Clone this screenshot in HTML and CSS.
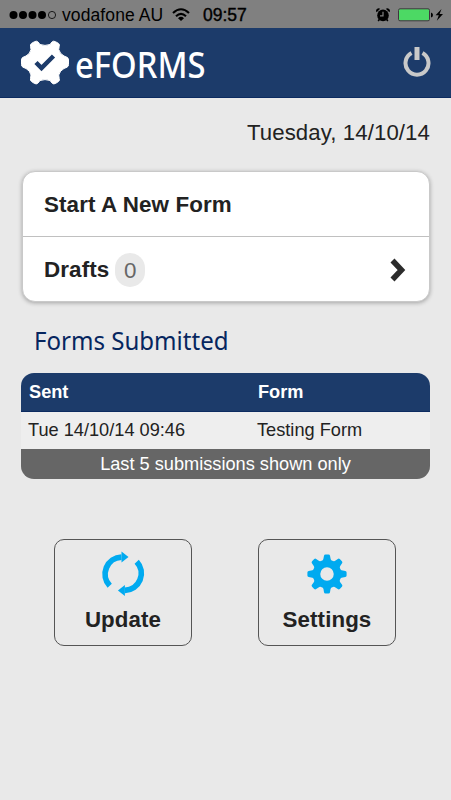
FILE: index.html
```html
<!DOCTYPE html>
<html lang="en">
<head>
<meta charset="utf-8">
<title>eFORMS</title>
<link rel="stylesheet" href="styles.css">
</head>
<body>
<div class="status">
  <svg class="signal" width="50" height="10" viewBox="0 0 50 10"><circle cx="4.5" cy="5" r="4"/><circle cx="14" cy="5" r="4"/><circle cx="23.5" cy="5" r="4"/><circle cx="33" cy="5" r="4"/><circle cx="43" cy="5" r="3.6" fill="none" stroke="#000" stroke-width=".8"/></svg>
  <span class="carrier">vodafone AU</span>
  <svg class="wifi" width="18" height="14" viewBox="0 0 18 14"><g fill="none" stroke="#000" stroke-width="2.1"><path d="M1 5Q9-2.5 17 5M4 8.2Q9 3.5 14 8.2"/></g><path d="M6 10.2Q9 7.5 12 10.2L9 13Z"/></svg>
  <span class="time">09:57</span>
  <svg class="alarm" width="14" height="14" viewBox="0 0 14 14"><circle cx="7" cy="7.4" r="5.8"/><path d="M.6 4.2A2.5 2.5 0 0 1 4.2.8ZM13.4 4.2A2.5 2.5 0 0 0 9.8.8ZM2.4 11l1.5 1.2-1.3 1.3-1-.9ZM11.6 11l-1.5 1.2 1.3 1.3 1-.9Z"/><path d="M7 3.8V7.8H4" fill="none" stroke="#808080" stroke-width="1.2"/></svg>
  <svg class="battery" width="46" height="14" viewBox="0 0 46 14"><rect x=".5" y=".8" width="31" height="12" rx="1.5" fill="#4cd964" stroke="#40343f"/><path d="M33 4.5Q35 5 35 7T33 9.5Z"/><path d="M43.5 1L37.6 7.3H40.8L38.8 12.8L45 6H41.6Z"/></svg>
</div>
<header class="header">
  <svg class="logo" width="50" height="48" viewBox="20 40 50 48"><path d="M34.5 42.7Q36.5 41.5 38 43L40 45.5Q45 47.3 50 45.5L52 43Q53.5 41.5 55.5 42.7L58.5 44.400Q60 45.5 59.2 47.3L58.7 50.5Q60 55 64 57L67 58.3Q68.5 59 68.5 61V65.5Q68.5 67.5 67 68.2L64 69.5Q60 71.5 58.7 76L59.2 79.5Q60 81.5 58.5 82.5L55.5 84.5Q53.5 85.5 52 84L50 81.5Q45 79.7 40 81.5L38 84Q36.5 85.5 34.5 84.5L31.5 82.5Q30 81.5 30.5 79.5L31 76Q30 71.5 26 69.5L23 68.2Q21.5 67.5 21.5 65.5V61Q21.5 59 23 58.3L26 57Q30 55 31 50.5L30.5 47.3Q30 45.5 31.5 44.4Z" fill="#fff" stroke="#fff"/><path d="M36 63.5L41.500 69L53.500 57" fill="none" stroke="#1c3b6a" stroke-width="4.5"/></svg>
  <span class="brand">eFORMS</span>
  <svg class="power" width="28" height="32" viewBox="0 0 28 32"><path d="M8.5 6.1A11.5 11.5 0 1 0 19.5 6.1" fill="none" stroke="#c9c9c9" stroke-width="4"/><path d="M14 0V13" stroke="#c9c9c9" stroke-width="5"/></svg>
</header>
<main>
  <div class="date">Tuesday, 14/10/14</div>
  <section class="menu">
    <div class="menu-row first">Start A New Form</div>
    <div class="menu-row"><span>Drafts</span><span class="count">0</span><svg class="arrow" width="18" height="24" viewBox="0 0 18 24"><path d="M3.5 2.5L12.5 12L3.5 21.5" fill="none" stroke="#2c2c2c" stroke-width="5.5"/></svg></div>
  </section>
  <h2><span>Forms Submitted</span></h2>
  <section class="table">
    <div class="head"><span>Sent</span><span>Form</span></div>
    <div class="row"><span>Tue 14/10/14 09:46</span><span>Testing Form</span></div>
    <div class="foot">Last 5 submissions shown only</div>
  </section>
  <div class="actions">
    <div class="button"><svg width="44" height="46" viewBox="0 0 44 46"><g id="half"><path d="M8.7 34.7A17 17 0 0 1 20.5 6.1" fill="none" stroke="#00aaf0" stroke-width="5.800"/><path d="M20.5.5L27.5 6L20.5 11.5Z" fill="#00aaf0"/></g><use href="#half" transform="rotate(180 22.2 22.7)"/></svg><span>Update</span></div>
    <div class="button settings"><svg width="44" height="46" viewBox="-22 -23 44 46"><g fill="#00aaf0"><circle r="10.5" fill="none" stroke="#00aaf0" stroke-width="7.5"/><g id="pair"><path d="M-5-12Q-3.500-14-3-18.300Q-2.800-19.600-1.500-19.600H1.500Q2.800-19.600 3-18.300Q3.500-14 5-12ZM-5 12Q-3.500 14-3 18.300Q-2.800 19.600-1.500 19.600H1.500Q2.800 19.600 3 18.300Q3.500 14 5 12Z"/></g><use href="#pair" transform="rotate(45)"/><use href="#pair" transform="rotate(90)"/><use href="#pair" transform="rotate(135)"/></g></svg><span>Settings</span></div>
  </div>
</main>
</body>
</html>
```
FILE: styles.css
```css
* { box-sizing: border-box; }
body { margin: 0; height: 800px; background: #e9e9e9; color: #222; font-family: "Liberation Sans", Arial, sans-serif; overflow: hidden; }
svg { display: block; flex: none; }
.status { display: flex; align-items: center; height: 28px; padding: 1px 7px 0 9px; background: #808080; color: #000; font-size: 17.5px; line-height: 28px; white-space: nowrap; }
.carrier { width: 101px; margin-left: 3px; letter-spacing: .1px; }
.wifi { margin-left: 9px; }
.time { margin-left: 13px; width: 45px; -webkit-text-stroke: .4px #000; }
.alarm { margin-left: auto; }
.battery { margin-left: 8px; }
.header { display: flex; align-items: center; height: 70px; padding: 0 20px; background: #1c3b6a; border-bottom: 1px solid #0c2b60; }
.brand { margin: 3px 0 0 5px; color: #fff; font: 500 37px/44px "Noto Sans", sans-serif; transform: scaleX(.885); transform-origin: left; }
.power { margin-left: auto; }
main { padding: 0 21px; }
.date { height: 73px; padding-top: 20px; text-align: right; font-size: 22.2px; line-height: 30px; letter-spacing: .1px; }
.menu { height: 131px; margin: 0 0 0 1px; background: #fff; border: 1px solid #c9c9c9; border-radius: 13px; box-shadow: 0 1px 4px rgba(0,0,0,.3); font-size: 22.4px; font-weight: bold; letter-spacing: .1px; }
.menu-row { display: flex; align-items: center; height: 64px; padding: 1px 22px 0 21px; }
.first { height: 65px; border-bottom: 1px solid #c0c0c0; padding-top: 2px; }
.count { width: 30px; height: 34px; margin-left: 6px; border-radius: 15px; background: #e9e9e9; color: #666; font-weight: normal; line-height: 35px; text-align: center; }
.arrow { margin-left: auto; }
h2 { height: 71px; margin: 0; padding: 22px 0 0 13px; color: #06265f; font: 400 25px/32px "Noto Sans", sans-serif; }
h2 span { display: inline-block; transform: scaleX(.962); transform-origin: left; }
.table { height: 106px; border-radius: 13px; overflow: hidden; font-size: 18.2px; }
.head, .row { display: grid; grid-template-columns: 229px 1fr; align-items: center; }
.head { height: 39px; padding-left: 8px; background: #1c3b6a; border-bottom: 1px solid #0c2b60; color: #fff; font-weight: bold; }
.row { height: 37px; padding-left: 7px; background: #eee; }
.foot { height: 30px; background: #666; color: #fff; line-height: 30px; text-align: center; }
.actions { display: flex; justify-content: space-between; padding: 60px 34px 0 33px; }
.button { display: flex; flex-direction: column; align-items: center; width: 138px; height: 107px; padding-top: 11px; border: 1px solid #555; border-radius: 10px; font-size: 22.3px; font-weight: bold; letter-spacing: .1px; }
.button span { margin-top: 10px; line-height: 26px; }
```
